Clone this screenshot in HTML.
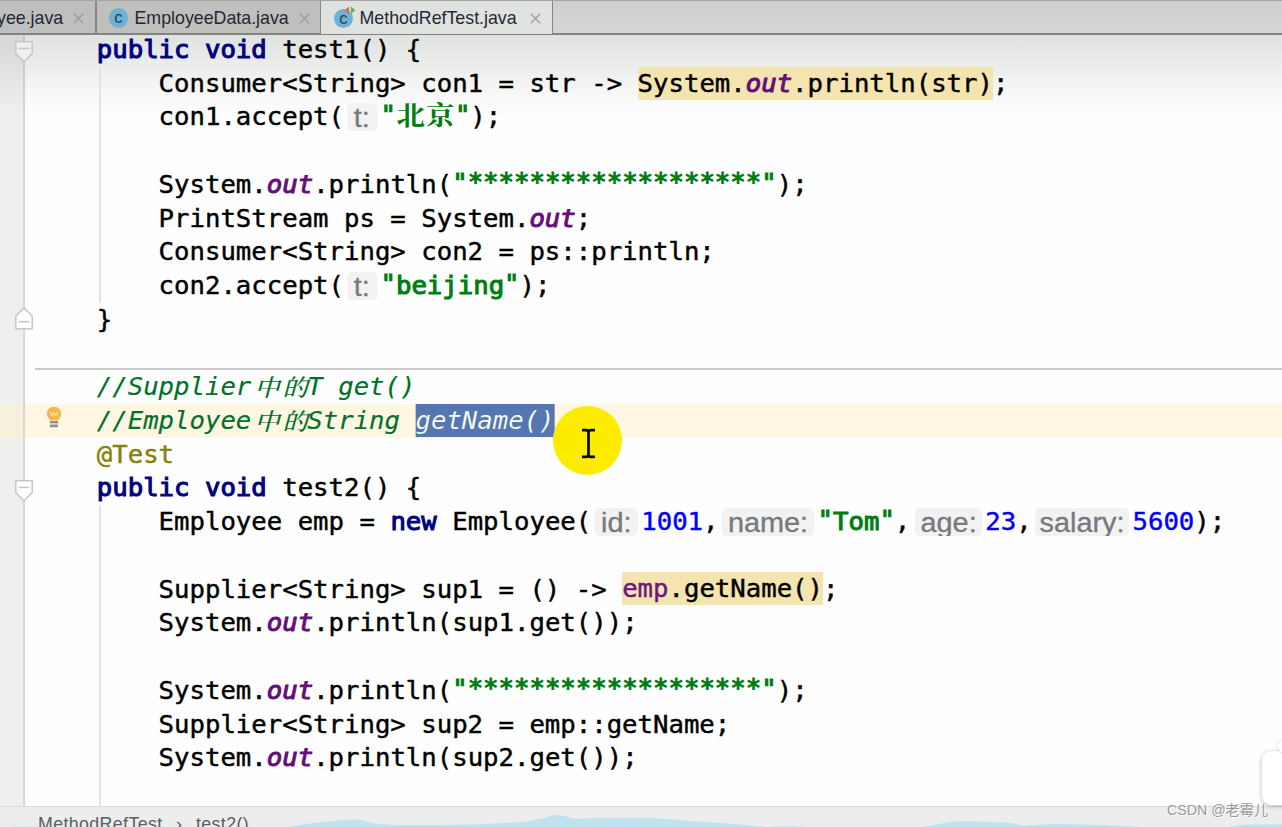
<!DOCTYPE html>
<html lang="zh">
<head>
<meta charset="utf-8">
<title>MethodRefTest.java</title>
<style>
*{box-sizing:border-box;margin:0;padding:0}
html,body{width:1282px;height:827px;overflow:hidden;background:#fdfefd}
body{position:relative;font-family:"Liberation Sans","Noto Sans CJK SC",sans-serif}
#editor{position:absolute;left:0;top:0;width:1282px;height:806px;background:#fdfefd;overflow:hidden}
#topshade{position:absolute;left:0;top:35px;width:1282px;height:82px;background:linear-gradient(to bottom,rgba(120,126,120,.22),rgba(120,126,120,.12) 42%,rgba(120,126,120,.035) 78%,rgba(120,126,120,0))}
#gutter{position:absolute;left:0;top:35px;width:23px;height:771px;background:#eef0ee}
#foldline{position:absolute;left:23px;top:35px;width:2px;height:771px;background:#d6d7d6}
.row{position:absolute;left:0;width:1282px;height:33.76px}
#caretrow{top:404.1px;height:33.5px;background:#fff7e1}
#caretrowg{position:absolute;left:0;top:404.1px;width:23px;height:33.5px;background:#f8f2dc}
#sep{position:absolute;left:34.5px;top:368.4px;width:1248px;height:1.6px;background:#c8cac8}
.ig{position:absolute;left:99.3px;width:1.6px;background:#e2e3e2}
.ln{position:absolute;left:35.2px;height:33.76px;line-height:34.4px;white-space:pre;font-family:"DejaVu Sans Mono","Liberation Mono","Noto Sans CJK SC",monospace;font-size:24px;color:#000;transform:scaleX(1.0693);transform-origin:0 0;-webkit-text-stroke:.42px currentColor}
.k{color:#000080;-webkit-text-stroke:1px #000080}
.s{color:#007c10;-webkit-text-stroke:1px #007c10}
.f{color:#660e7a;font-style:italic;-webkit-text-stroke:1px #660e7a}
.v{color:#6e1580}
.n{color:#0000ff}
.st{position:relative;top:-2.6px}
.q{position:relative;top:-2.2px}
.a{color:#878207}
.c{color:#00702c;font-style:italic;-webkit-text-stroke:.15px #00702c}
.hl{background:#f4e4af;padding:3.1px 0 1.9px}
.sel{background:#5676b2;color:#fff;padding:3.2px 0 2.2px}
.cj{display:inline-block;text-align:center;font-family:"Noto Serif CJK SC","Noto Sans CJK SC",serif;font-size:26.6px;line-height:0;vertical-align:baseline;-webkit-text-stroke:0}
.s .cj{font-weight:700}
.c .cj{font-weight:500;font-style:italic;font-size:23.5px;position:relative;left:1.6px;top:.6px}
.h{display:inline-block;vertical-align:top;height:27.8px;line-height:31px;margin-top:3px;border-radius:5px;background:#f1f2f1;color:#757a7e;font-family:"Liberation Sans",sans-serif;font-size:27px;font-weight:normal;font-style:normal;text-align:center;overflow:hidden;-webkit-text-stroke:.3px #757a7e}

#tabs{position:absolute;left:0;top:0;width:1282px;height:35px;background:linear-gradient(#cfd0ce,#d5d7d4);overflow:hidden}
#tabs .topl{position:absolute;left:0;top:0;width:1282px;height:1px;background:#a4a5a4}
#tabs .botl{position:absolute;left:0;top:33px;width:1282px;height:1.6px;background:#828382}
#tabs .under{position:absolute;left:0;top:34.6px;width:1282px;height:.4px;background:#dfe1df}
.tab{position:absolute;top:1px;height:32px;background:#bfc0be}
.tab.act{background:#e0e2e0;height:33.4px}
.tsep{position:absolute;top:1px;width:1.4px;height:33px;background:#858685}
.tl{position:absolute;top:5.5px;height:24px;line-height:24px;font-size:17.8px;color:#1f2933;white-space:pre;font-family:"Liberation Sans",sans-serif}
.ico{position:absolute;width:19.6px;height:19.6px;border-radius:50%;background:#6fb1d5}
.ico b{position:absolute;left:0;top:0;width:19.6px;height:19.6px;text-align:center;font:normal 16.5px/18px "Liberation Sans",sans-serif;color:#1f3f55}
.x{position:absolute;top:12.5px;width:11px;height:11px}
#crumbs{position:absolute;left:0;top:806px;width:1282px;height:21px;background:#ecedec;overflow:hidden}
#crumbs .bl{position:absolute;left:0;top:-1px;width:1282px;height:1.5px;background:#d9dad9}
#crumbs .t{position:absolute;top:6.3px;height:24px;line-height:24px;font-size:17.8px;letter-spacing:.38px;color:#5a5f63;white-space:pre}
#wm{position:absolute;left:1167px;top:801px;height:18px;line-height:18px;font-size:14.2px;color:#9b9b9b;white-space:pre;text-shadow:1px 1px 0 rgba(255,255,255,.9);font-family:"Liberation Sans","Noto Sans CJK SC",sans-serif}
#tv{position:absolute;left:1261.5px;top:750.5px;width:40px;height:54.5px;border-radius:9px;background:#fff;box-shadow:0 1px 5px rgba(0,0,0,.28)}
#tvear{position:absolute;left:1277.5px;top:741px;width:9px;height:12px;border-radius:5px;background:#fff;transform:rotate(-35deg);box-shadow:0 0 3px rgba(0,0,0,.2)}
#spot{position:absolute;left:553px;top:406px;width:69px;height:69px;border-radius:50%;background:#fdec00}
</style>
</head>
<body>
<div id="editor">
<div id="gutter"></div>
<div id="caretrow" class="row"></div>
<div id="caretrowg"></div>
<div id="foldline"></div>
<div id="topshade"></div>
<div id="sep"></div>
<div class="ig" style="top:66px;height:237px"></div>
<div class="ig" style="top:505px;height:301px"></div>
<svg class="fold" style="position:absolute;left:15px;top:41.3px" width="18" height="22" viewBox="0 0 18 22"><path d="M.8 .8 H17.2 V12.6 L9 20.8 L.8 12.6 Z" fill="#eef0ee" stroke="#c6c7c6" stroke-width="1.5"/><path d="M3.6 7.4 H14.4" stroke="#c6c7c6" stroke-width="1.5"/></svg>
<svg class="fold" style="position:absolute;left:15px;top:307px" width="18" height="23" viewBox="0 0 18 23"><path d="M9 .9 L17.2 9 V21.8 H.8 V9 Z" fill="#fdfefd" stroke="#c6c7c6" stroke-width="1.5"/><path d="M3.6 14.7 H14.4" stroke="#c6c7c6" stroke-width="1.5"/></svg>
<svg class="fold" style="position:absolute;left:15px;top:480.4px" width="18" height="22" viewBox="0 0 18 22"><path d="M.8 .8 H17.2 V12.6 L9 20.8 L.8 12.6 Z" fill="#fdfefd" stroke="#c6c7c6" stroke-width="1.5"/><path d="M3.6 7.4 H14.4" stroke="#c6c7c6" stroke-width="1.5"/></svg>
<svg id="bulb" style="position:absolute;left:46px;top:406px" width="16" height="23" viewBox="0 0 16 23"><path d="M8 .8 C3.6 .8 .8 4 .8 7.6 C.8 10.6 2.8 12 3.9 14.6 H12.1 C13.2 12 15.2 10.6 15.2 7.6 C15.2 4 12.4 .8 8 .8 Z" fill="#f5b84c"/><path d="M4.6 6.6 L6.3 9.4 L8 6.6 L9.7 9.4 L11.4 6.6" fill="none" stroke="#fde3a4" stroke-width="1.3" stroke-linejoin="round" stroke-linecap="round"/><rect x="3.9" y="15" width="8.2" height="2.1" fill="#8c8f93"/><rect x="3.9" y="17.1" width="8.2" height="1.6" fill="#c9cbcd"/><rect x="3.9" y="18.7" width="8.2" height="2.6" rx="1" fill="#8c8f93"/></svg>
<!--CODE-->
<div class="ln" style="top:32.90px">    <span class="k">public void</span> test1() {</div>
<div class="ln" style="top:66.63px">        Consumer&lt;String&gt; con1 = str -&gt; <span class="hl">System.<span class="f">out</span>.println(str)</span>;</div>
<div class="ln" style="top:100.36px">        con1.accept(<span class="h" style="width:27.96px;margin-left:2.71px;margin-right:3.46px">t:</span><span class="s"><span class="q">"</span><span class="cj" style="width:27.59px">北</span><span class="cj" style="width:27.59px">京</span><span class="q">"</span></span>);</div>
<div class="ln" style="top:167.82px">        System.<span class="f">out</span>.println(<span class="s"><span class="q">"</span><span class="st">*******************</span><span class="q">"</span></span>);</div>
<div class="ln" style="top:201.55px">        PrintStream ps = System.<span class="f">out</span>;</div>
<div class="ln" style="top:235.28px">        Consumer&lt;String&gt; con2 = ps::println;</div>
<div class="ln" style="top:269.01px">        con2.accept(<span class="h" style="width:27.96px;margin-left:2.71px;margin-right:3.46px">t:</span><span class="s"><span class="q">"</span>beijing<span class="q">"</span></span>);</div>
<div class="ln" style="top:302.74px">    }</div>
<div class="ln" style="top:370.20px">    <span class="c">//Supplier<span class="cj" style="width:26.19px">中</span><span class="cj" style="width:26.19px">的</span>T get()</span></div>
<div class="ln" style="top:403.93px">    <span class="c">//Employee<span class="cj" style="width:26.19px">中</span><span class="cj" style="width:26.19px">的</span>String <span class="sel">getName()</span></span></div>
<div class="ln" style="top:437.66px">    <span class="a">@Test</span></div>
<div class="ln" style="top:471.39px">    <span class="k">public void</span> test2() {</div>
<div class="ln" style="top:505.12px">        Employee emp = <span class="k">new</span> Employee(<span class="h" style="width:40.40px;margin-left:3.18px;margin-right:3.18px">id:</span><span class="n">1001</span>,<span class="h" style="width:86.32px;margin-left:3.18px;margin-right:3.18px">name:</span><span class="s"><span class="q">"</span>Tom<span class="q">"</span></span>,<span class="h" style="width:63.59px;margin-left:4.02px;margin-right:2.53px">age:</span><span class="n">23</span>,<span class="h" style="width:88.00px;margin-left:3.18px;margin-right:3.18px">salary:</span><span class="n">5600</span>);</div>
<div class="ln" style="top:572.58px">        Supplier&lt;String&gt; sup1 = () -&gt; <span class="hl"><span class="v">emp</span>.getName()</span>;</div>
<div class="ln" style="top:606.31px">        System.<span class="f">out</span>.println(sup1.get());</div>
<div class="ln" style="top:673.77px">        System.<span class="f">out</span>.println(<span class="s"><span class="q">"</span><span class="st">*******************</span><span class="q">"</span></span>);</div>
<div class="ln" style="top:707.50px">        Supplier&lt;String&gt; sup2 = emp::getName;</div>
<div class="ln" style="top:741.23px">        System.<span class="f">out</span>.println(sup2.get());</div>
<!--/CODE-->
<div id="spot"></div>
<svg id="ibeam" style="position:absolute;left:580px;top:427px" width="17" height="33" viewBox="0 0 17 33"><path d="M2 3.2 H6 Q8.5 3.2 8.5 5.6 Q8.5 3.2 11 3.2 H15 M8.5 5 V28 M2 29.8 H6 Q8.5 29.8 8.5 27.4 Q8.5 29.8 11 29.8 H15" fill="none" stroke="#0c0c0c" stroke-width="2.8"/></svg>
</div>
<div id="tabs">
<div class="topl"></div>
<div class="tab" style="left:0;width:96px"></div>
<div class="tab" style="left:96px;width:225px"></div>
<div class="tab act" style="left:321px;width:231.5px"></div>
<div class="botl"></div>
<div class="tab act" style="left:321px;width:231.5px;top:1px"></div>
<div class="tsep" style="left:95.3px"></div>
<div class="tsep" style="left:319.8px"></div>
<div class="tsep" style="left:552px"></div>
<div class="tl" style="left:-3px">yee.java</div>
<svg class="x" style="left:73.4px" viewBox="0 0 11 11"><path d="M.8 .8 L10.2 10.2 M10.2 .8 L.8 10.2" stroke="#9c9d9c" stroke-width="1.3" fill="none"/></svg>
<div class="ico" style="left:108.6px;top:8px"><b>c</b></div>
<div class="tl" style="left:134.5px">EmployeeData.java</div>
<svg class="x" style="left:298.5px" viewBox="0 0 11 11"><path d="M.8 .8 L10.2 10.2 M10.2 .8 L.8 10.2" stroke="#9c9d9c" stroke-width="1.3" fill="none"/></svg>
<div class="ico" style="left:333.6px;top:8.6px"><b>c</b></div>
<svg style="position:absolute;left:344px;top:6px" width="13" height="9" viewBox="0 0 13 9"><path d="M5 .5 V8 L.5 4.2 Z" fill="#e0694a"/><path d="M6.8 .5 V8 L11.5 4.2 Z" fill="#56b84e"/></svg>
<div class="tl" style="left:359.5px">MethodRefTest.java</div>
<svg class="x" style="left:530px" viewBox="0 0 11 11"><path d="M.8 .8 L10.2 10.2 M10.2 .8 L.8 10.2" stroke="#9c9d9c" stroke-width="1.3" fill="none"/></svg>
</div>
<div id="crumbs">
<svg id="wave" style="position:absolute;left:0;top:0" width="1282" height="21" viewBox="0 806 1282 21"><path fill="#bfe3ee" d="M0 825.4 L15 826.2 L45 827 Z M287 827 C300 825 312 823 325 821.8 C338 820.6 346 819.4 355 819.5 C363 819.7 368 822.5 375 823.5 C385 824.8 395 825 410 825 L440 825 C455 824.8 470 824.4 480 824 C495 823.4 510 822.8 521 822 C531 821.2 538 819 545 818 C550 816 554 815 558 815 C564 815 569 818 574 818.7 C580 819 585 818 592 818 L641 817.7 C655 818 668 819 680 820 C695 821.4 708 822.4 720 823 C732 823.8 742 824.6 752 825.5 L766 827 Z M768 827 C778 826 795 826 806 827 Z M922 827 C935 825 948 822 959 821.3 C975 820.8 990 821.8 1004 822.5 C1012 823.2 1019 824.6 1025 825.5 C1035 824.6 1050 824 1061 824 C1085 824.4 1105 825.2 1126 826 L1142 827 Z M1228 827 C1236 825.6 1242 824.8 1250 824.5 L1282 824.3 V827 Z"/></svg>
<div class="bl"></div>
<div class="t" style="left:38px">MethodRefTest</div>
<div class="t" style="left:176px">›</div>
<div class="t" style="left:196px">test2()</div>
</div>
<div id="tv"></div><div id="tvear"></div>
<div id="wm">CSDN @老霉儿</div>

</body>
</html>
